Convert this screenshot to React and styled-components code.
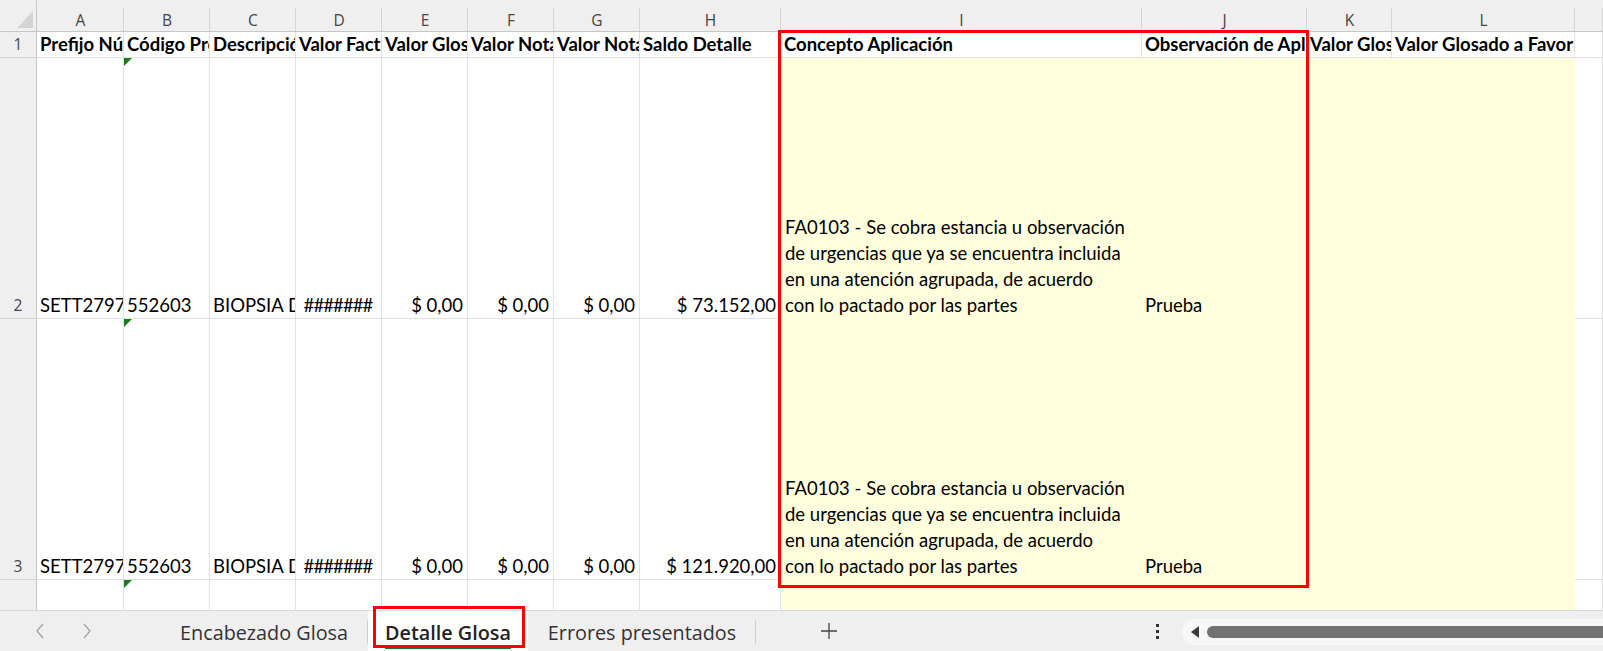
import React from "react";
import styled, { createGlobalStyle } from "styled-components";

const GlobalStyle = createGlobalStyle`
  html, body {
    margin: 0;
    padding: 0;
    height: 100%;
    overflow: hidden;
    background: #ffffff;
  }
  #root {
    height: 100%;
  }
`;

const ROW_HEAD = 37;
const COLS = [
  { id: "A", w: 87 },
  { id: "B", w: 86 },
  { id: "C", w: 86 },
  { id: "D", w: 86 },
  { id: "E", w: 86 },
  { id: "F", w: 86 },
  { id: "G", w: 86 },
  { id: "H", w: 141 },
  { id: "I", w: 361, fill: true },
  { id: "J", w: 165, fill: true },
  { id: "K", w: 85, fill: true },
  { id: "L", w: 183, fill: true },
  { id: "", w: null },
];
const ROWS = [32, 26, 261, 261];

const CONCEPTO = [
  "FA0103 - Se cobra estancia u observación",
  "de urgencias que ya se encuentra incluida",
  "en una atención agrupada, de acuerdo",
  "con lo pactado por las partes",
];

const HEADERS = [
  "Prefijo Número Factura",
  "Código Procedimiento",
  "Descripción",
  "Valor Factura",
  "Valor Glosa",
  "Valor Nota Crédito",
  "Valor Nota Débito",
  "Saldo Detalle",
  "Concepto Aplicación",
  "Observación de Aplicación",
  "Valor Glosado",
  "Valor Glosado a Favor",
  "",
];

const detailRow = (saldo) => [
  { v: "SETT27972202" },
  { v: "552603", flag: true },
  { v: "BIOPSIA DE PIEL" },
  { v: "#######", align: "center", tight: true },
  { v: "$ 0,00", align: "right" },
  { v: "$ 0,00", align: "right" },
  { v: "$ 0,00", align: "right" },
  { v: saldo, align: "right" },
  { lines: CONCEPTO },
  { v: "Prueba" },
  {},
  {},
  {},
];

const DATA = [
  HEADERS.map((h) => ({ v: h, bold: true })),
  detailRow("$ 73.152,00"),
  detailRow("$ 121.920,00"),
  COLS.map((c, i) => (i === 1 ? { flag: true } : {})),
];

const colStart = (idx) =>
  ROW_HEAD + COLS.slice(0, idx).reduce((s, c) => s + (c.w || 0), 0);

export default function App() {
  const iIdx = COLS.findIndex((c) => c.id === "I");
  const jIdx = COLS.findIndex((c) => c.id === "J");
  const box = {
    left: colStart(iIdx) - 3,
    top: 30,
    width: colStart(jIdx + 1) + 2 - (colStart(iIdx) - 3),
    height: 558,
  };

  return (
    <>
      <GlobalStyle />
      <Window>
        <Sheet>
          <Grid>
            <Corner>
              <CornerMark />
            </Corner>
            {COLS.map((c, i) => (
              <ColHead key={"h" + i}>{c.id}</ColHead>
            ))}
            {DATA.map((row, r) => (
              <React.Fragment key={"r" + r}>
                <RowHead>{r + 1}</RowHead>
                {row.map((cell, ci) => {
                  const filled = COLS[ci].fill && r > 0;
                  return (
                    <Cell
                      key={ci}
                      $fill={filled}
                      $align={cell.align}
                      $bold={cell.bold}
                      $tight={cell.tight}
                    >
                      {cell.flag && <ErrorFlag />}
                      {cell.lines ? (
                        <Wrapped>
                          {cell.lines.map((l) => (
                            <span key={l}>{l}</span>
                          ))}
                        </Wrapped>
                      ) : (
                        cell.v
                      )}
                    </Cell>
                  );
                })}
              </React.Fragment>
            ))}
          </Grid>
          <Highlight style={box} />
        </Sheet>

        <TabBar>
          <NavArea>
            <NavButton aria-label="anterior">
              <svg width="10" height="16" viewBox="0 0 10 16">
                <polyline
                  points="8,1 2,8 8,15"
                  fill="none"
                  stroke="#a3a3a3"
                  strokeWidth="1.3"
                />
              </svg>
            </NavButton>
            <NavButton aria-label="siguiente">
              <svg width="10" height="16" viewBox="0 0 10 16">
                <polyline
                  points="2,1 8,8 2,15"
                  fill="none"
                  stroke="#a3a3a3"
                  strokeWidth="1.3"
                />
              </svg>
            </NavButton>
          </NavArea>
          <SheetTab $w={208}>Encabezado Glosa</SheetTab>
          <ActiveTab>
            <ActiveLabel>Detalle Glosa</ActiveLabel>
          </ActiveTab>
          <SheetTab $w={228}>Errores presentados</SheetTab>
          <AddButton aria-label="nueva hoja">
            <svg width="18" height="18" viewBox="0 0 18 18">
              <path d="M9 1v16M1 9h16" stroke="#444" strokeWidth="1.3" />
            </svg>
          </AddButton>
          <Spacer />
          <MoreDots>
            <i />
            <i />
            <i />
          </MoreDots>
          <ScrollTrack>
            <svg width="10" height="12" viewBox="0 0 10 12">
              <path d="M9 0v12L1 6z" fill="#3a3a3a" />
            </svg>
            <ScrollThumb />
          </ScrollTrack>
        </TabBar>
      </Window>
    </>
  );
}

const Window = styled.div`
  display: flex;
  flex-direction: column;
  height: 100vh;
  width: 100vw;
  overflow: hidden;
`;

const Sheet = styled.div`
  position: relative;
  flex: 1;
  overflow: hidden;
`;

const Grid = styled.div`
  display: grid;
  grid-template-columns: ${ROW_HEAD}px ${COLS.map((c) => (c.w ? c.w + "px" : "1fr")).join(" ")};
  grid-template-rows: ${ROWS.map((h) => h + "px").join(" ")} 60px;
  font-family: "Lato", "Carlito", sans-serif;
  font-size: 18.5px;
  color: #000;
`;

const Corner = styled.div`
  background: #efefef;
  border-right: 1px solid #c6c6c6;
  border-bottom: 1px solid #c6c6c6;
  display: flex;
  align-items: flex-end;
  justify-content: flex-end;
  padding: 0 3px 3px 0;
`;

const CornerMark = styled.div`
  width: 16px;
  height: 17px;
  background: #d4d4d4;
  clip-path: polygon(100% 0, 100% 100%, 0 100%);
`;

const ColHead = styled.div`
  background-color: #efefef;
  background-image: linear-gradient(to left, #d6d6d6 1px, transparent 1px);
  background-size: 100% 23px;
  background-position: bottom right;
  background-repeat: no-repeat;
  border-bottom: 1px solid #c6c6c6;
  padding-top: 8px;
  display: flex;
  align-items: center;
  justify-content: center;
  font-family: "Segoe UI", "Open Sans", "Noto Sans", sans-serif;
  font-size: 15.5px;
  color: #444;
`;

const RowHead = styled.div`
  background: #efefef;
  border-right: 1px solid #c6c6c6;
  border-bottom: 1px solid #d6d6d6;
  display: flex;
  align-items: flex-end;
  justify-content: center;
  font-family: "Segoe UI", "Open Sans", "Noto Sans", sans-serif;
  font-size: 15.5px;
  line-height: 25px;
  color: #444;
`;

const Cell = styled.div`
  position: relative;
  display: flex;
  align-items: flex-end;
  justify-content: ${(p) =>
    p.$align === "right" ? "flex-end" : p.$align === "center" ? "center" : "flex-start"};
  padding: 0 4px 0 3px;
  background: ${(p) => (p.$fill ? "#fffedd" : "#ffffff")};
  border-right: 1px solid ${(p) => (p.$fill ? "#fffedd" : "#e1e1e1")};
  border-bottom: 1px solid ${(p) => (p.$fill ? "#fffedd" : "#e1e1e1")};
  font-weight: ${(p) => (p.$bold ? 700 : 400)};
  letter-spacing: ${(p) => (p.$tight ? "-0.9px" : "normal")};
  line-height: 26px;
  white-space: nowrap;
  overflow: hidden;
  min-width: 0;
`;

const Wrapped = styled.div`
  display: flex;
  flex-direction: column;
  padding-left: 1px;
`;

const ErrorFlag = styled.span`
  position: absolute;
  left: 0;
  top: 0;
  width: 8px;
  height: 8px;
  background: #1f7a1f;
  clip-path: polygon(0 0, 100% 0, 0 100%);
`;

const Highlight = styled.div`
  position: absolute;
  box-sizing: border-box;
  border: 3px solid #ff0000;
  pointer-events: none;
`;

const TabBar = styled.div`
  height: 41px;
  flex-shrink: 0;
  display: flex;
  align-items: stretch;
  background: #efefef;
  border-top: 1px solid #d9d9d9;
  box-sizing: border-box;
  font-family: "Segoe UI", "Open Sans", "Noto Sans", sans-serif;
  font-size: 19.8px;
  color: #333;
`;

const NavArea = styled.div`
  width: 160px;
  display: flex;
  padding-left: 16px;
  box-sizing: border-box;
`;

const NavButton = styled.div`
  width: 47px;
  display: flex;
  align-items: center;
  justify-content: center;
`;

const SheetTab = styled.div`
  width: ${(p) => p.$w}px;
  display: flex;
  align-items: center;
  justify-content: center;
  position: relative;
  padding-top: 2px;
  &::after {
    content: "";
    position: absolute;
    right: 0;
    top: 9px;
    bottom: 7px;
    width: 1px;
    background: #cfcfcf;
  }
`;

const ActiveTab = styled.div`
  width: 160px;
  position: relative;
  background: #ffffff;
  display: flex;
  align-items: center;
  justify-content: center;
  padding-top: 2px;
  &::after {
    content: "";
    position: absolute;
    left: 5px;
    right: 3px;
    top: -5px;
    bottom: 3px;
    border: 3px solid #ff0000;
  }
`;

const ActiveLabel = styled.span`
  font-weight: 600;
  color: #222;
  position: relative;
  &::after {
    content: "";
    position: absolute;
    left: 0;
    right: 0;
    bottom: -3px;
    height: 2px;
    background: #107c41;
  }
`;

const AddButton = styled.div`
  width: 146px;
  display: flex;
  align-items: center;
  justify-content: center;
`;

const Spacer = styled.div`
  flex: 1;
`;

const MoreDots = styled.div`
  width: 24px;
  margin-right: 13px;
  display: flex;
  flex-direction: column;
  align-items: center;
  justify-content: center;
  gap: 3px;
  i {
    width: 3px;
    height: 3px;
    background: #333;
  }
`;

const ScrollTrack = styled.div`
  box-sizing: border-box;
  width: 421px;
  align-self: center;
  height: 26px;
  margin-top: 2px;
  border-radius: 13px 0 0 13px;
  background: #f7f7f7;
  display: flex;
  align-items: center;
  padding-left: 8px;
  gap: 7px;
`;

const ScrollThumb = styled.div`
  flex: 1;
  height: 12px;
  border-radius: 6px 0 0 6px;
  background: #717171;
`;
